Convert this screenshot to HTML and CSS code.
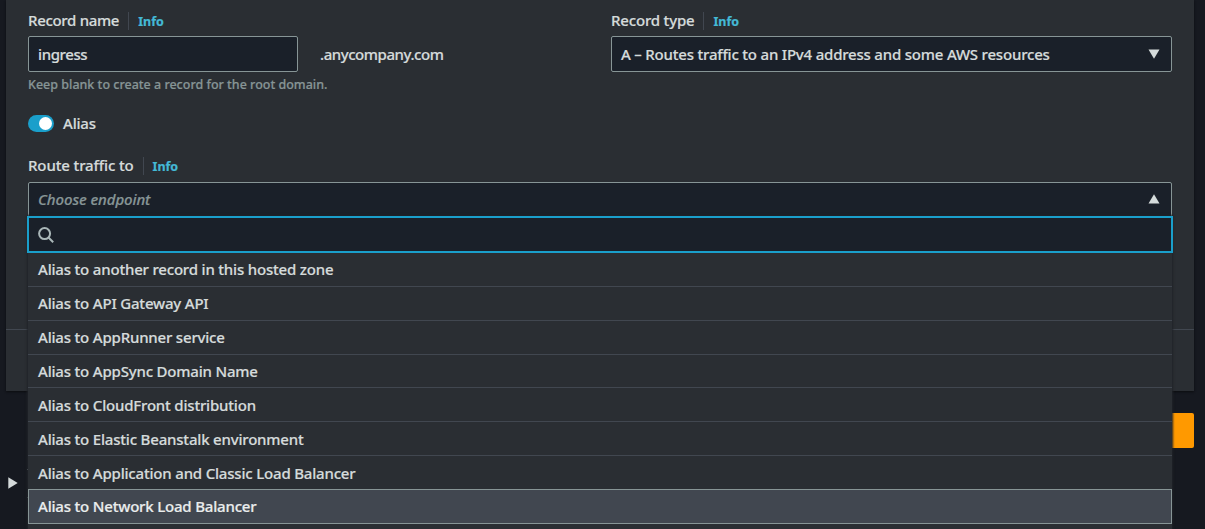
FILE: index.html
```html
<!DOCTYPE html>
<html lang="en">
<head>
<meta charset="utf-8">
<title>Create record</title>
<link rel="stylesheet" href="styles.css">
</head>
<body>
<main class="page">
  <section class="card">
    <div class="card-body">
      <div class="columns">
        <div class="field">
          <div class="label"><span class="label-text t-name">Record name</span><a class="info">Info</a></div>
          <div class="name-row">
            <div class="input"><span class="t-ingress">ingress</span></div>
            <span class="domain">.anycompany.com</span>
          </div>
          <div class="hint">Keep blank to create a record for the root domain.</div>
        </div>
        <div class="field">
          <div class="label"><span class="label-text t-type">Record type</span><a class="info">Info</a></div>
          <div class="input select">
            <span class="t-routes">A – Routes traffic to an IPv4 address and some AWS resources</span>
            <svg class="caret" viewBox="0 0 12 10"><path d="M.5 .5h11L6 9.8z"/></svg>
          </div>
        </div>
      </div>
      <div class="toggle-row"><span class="toggle"><span class="knob"></span></span><span class="t-alias">Alias</span></div>
      <div class="label"><span class="label-text t-route">Route traffic to</span><a class="info">Info</a></div>
      <div class="endpoint">
        <div class="input select">
          <span class="placeholder">Choose endpoint</span>
          <svg class="caret" viewBox="0 0 12 10"><path d="M.5 9.5h11L6 .2z"/></svg>
        </div>
        <div class="dropdown">
          <div class="search">
            <svg class="search-icon" viewBox="0 0 16 16"><circle cx="6.6" cy="6.6" r="5.5"/><path d="M10.5 10.5l4.7 4.7"/></svg>
          </div>
          <ul class="options">
            <li class="option">Alias to another record in this hosted zone</li>
            <li class="option">Alias to API Gateway API</li>
            <li class="option">Alias to AppRunner service</li>
            <li class="option">Alias to AppSync Domain Name</li>
            <li class="option">Alias to CloudFront distribution</li>
            <li class="option">Alias to Elastic Beanstalk environment</li>
            <li class="option">Alias to Application and Classic Load Balancer</li>
            <li class="option active">Alias to Network Load Balancer</li>
          </ul>
        </div>
      </div>
    </div>
    <div class="card-footer"></div>
  </section>
  <div class="actions"><span class="button"></span></div>
  <div class="expander"><svg class="arrow" viewBox="0 0 10 12"><path d="M.3 .3v11.4L9.7 6z"/></svg><span class="sliver"></span></div>
</main>
</body>
</html>
```
FILE: styles.css
```css
* { box-sizing: border-box; }
body {
  margin: 0;
  height: 529px;
  overflow: hidden;
  background: #161920;
  color: #d5dbdb;
  font: 500 15px/20px "Noto Sans", "Open Sans", sans-serif;
  letter-spacing: -.19px;
  -webkit-text-stroke: .2px;
  white-space: nowrap;
}
.page { padding: 0 11px 0 6px; }
.card {
  height: 391px;
  background: #2a2e33;
  box-shadow: 0 1px 2px #0b0d10;
}
.card-body { height: 330px; padding: 11px 22px 0; border-bottom: 1px solid #414750; }
.columns { display: grid; grid-template-columns: 561px 561px; gap: 22px; }
.label { display: flex; align-items: center; height: 20px; }
.label-text { padding: 0 9px 2px 0; }
.t-name { letter-spacing: -.32px; }
.t-type { letter-spacing: -.18px; }
.t-route { letter-spacing: -.13px; }
.t-ingress { letter-spacing: -.4px; }
.t-routes { letter-spacing: -.2px; }
.info {
  height: 18px;
  padding-left: 9px;
  border-left: 1px solid #414750;
  color: #44b9d6;
  font-size: 12.5px;
  font-weight: 700;
  letter-spacing: 0;
  line-height: 20px;
}
.input {
  display: flex;
  align-items: center;
  height: 36px;
  padding: 0 9px;
  background: #1a2029;
  border: 1px solid #879596;
  border-radius: 2px;
}
.field .input { margin-top: 5px; }
.name-row { display: flex; align-items: center; }
.name-row .input { width: 270px; }
.domain { margin: 5px 0 0 22px; letter-spacing: -.45px; }
.hint { margin-top: 3px; color: #879596; font-size: 12.5px; letter-spacing: 0; line-height: 20px; }
.select { justify-content: space-between; }
.caret { width: 12px; height: 10px; margin-right: 2px; fill: #d5dbdb; }
.toggle-row { display: flex; align-items: center; gap: 9px; margin-top: 18px; height: 20px; }
.toggle {
  display: flex;
  justify-content: flex-end;
  align-items: center;
  width: 26px;
  height: 17px;
  padding: 0 2px;
  border-radius: 9px;
  background: #1a9fcb;
}
.knob { width: 13px; height: 13px; border-radius: 50%; background: #fff; }
.toggle-row + .label { margin-top: 23px; }
.endpoint { position: relative; margin-top: 6px; }
.endpoint .select { padding-bottom: 2px; }
.placeholder { color: #879596; font-style: italic; letter-spacing: -.1px; }
.dropdown {
  position: absolute;
  top: 34px;
  left: 0;
  right: 0;
  height: 320px;
  background: #2a2e33;
  box-shadow: 0 0 2px 1px #202328;
}
.search {
  display: flex;
  align-items: center;
  height: 37px;
  margin: 0 -1px;
  padding: 0 9px;
  border: 2px solid #1a9fcb;
  background: #1a2029;
}
.search-icon { width: 16px; height: 16px; fill: none; stroke: #aab7b8; stroke-width: 2; }
.options { margin: 0; padding: 0; list-style: none; }
.option {
  display: flex;
  align-items: center;
  height: 34px;
  padding: 0 10px;
  border-bottom: 1px solid #414750;
}
.option:nth-child(-n+3) { padding-bottom: 1px; }
.option:nth-child(4) { height: 33px; }
.option:nth-child(7) { height: 33px; border-bottom: 0; }
.option.active { height: 35px; padding: 0 9px 1px; background: #414750; border: 1px solid #879596; color: #eaeded; }
.actions { display: flex; justify-content: flex-end; margin-top: 22px; }
.button { width: 110px; height: 35px; background: #ff9900; border-radius: 2px; }
.expander { display: flex; align-items: center; gap: 9px; height: 12px; margin: 29px 0 0 2px; }
.arrow { width: 10px; height: 12px; fill: #d5dbdb; }
.sliver { width: 1px; height: 29px; border-top: 1px solid #879596; border-bottom: 1px solid #687078; }
```
